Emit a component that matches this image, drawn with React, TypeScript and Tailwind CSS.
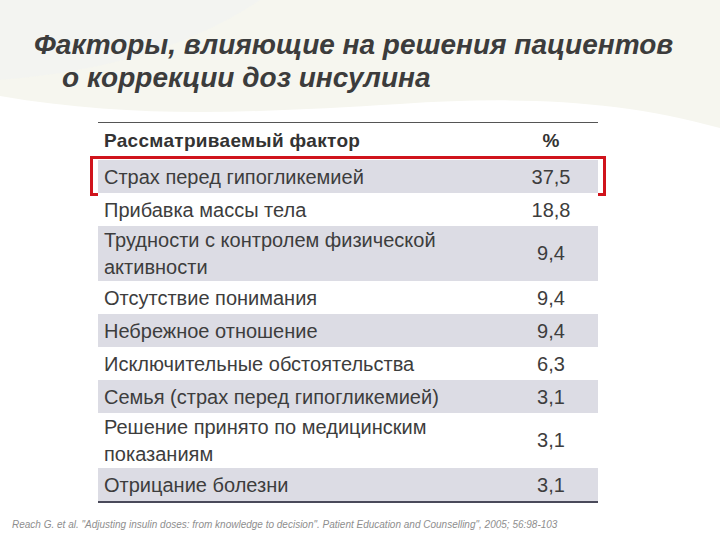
import React from 'react';

type Row = { label: React.ReactNode; value: string; shaded: boolean; tall?: boolean; marked?: boolean };

const rows: Row[] = [
  { label: 'Страх перед гипогликемией', value: '37,5', shaded: true, marked: true },
  { label: 'Прибавка массы тела', value: '18,8', shaded: false },
  { label: <>Трудности с контролем физической<br />активности</>, value: '9,4', shaded: true, tall: true },
  { label: 'Отсутствие понимания', value: '9,4', shaded: false },
  { label: 'Небрежное отношение', value: '9,4', shaded: true },
  { label: 'Исключительные обстоятельства', value: '6,3', shaded: false },
  { label: 'Семья (страх перед гипогликемией)', value: '3,1', shaded: true },
  { label: <>Решение принято по медицинским<br />показаниям</>, value: '3,1', shaded: false, tall: true },
  { label: 'Отрицание болезни', value: '3,1', shaded: true },
];

function Background() {
  return (
    <svg className="absolute inset-0 w-full h-full" viewBox="0 0 720 540" preserveAspectRatio="none">
      <rect width="720" height="540" fill="#ffffff" />
      <path d="M0 0 H720 V128 C620 100 520 96 400 104 C260 112 140 120 0 96 Z" fill="#f6f6ef" />
      <path d="M0 0 H260 C200 40 120 70 0 80 Z" fill="#f1f3f1" opacity="0.6" />
    </svg>
  );
}

export default function App() {
  return (
    <div className="relative w-[720px] h-[540px] overflow-hidden bg-white" style={{ fontFamily: '"Liberation Sans", Arial, sans-serif' }}>
      <Background />
      <div className="relative flex flex-col">
        <div className="pt-[28px] pl-[34px] text-[28px] leading-[33px] font-bold italic text-[#3c3c3c]">
          <div>Факторы, влияющие на решения пациентов</div>
          <div className="pl-[28px]">о коррекции доз инсулина</div>
        </div>

        <div className="ml-[98px] mt-[28px] w-[500px] border-t border-[#555] bg-white">
          <div className="flex h-[37px] items-center text-[19px] font-bold tracking-[0.3px] text-[#333]">
            <div className="w-[406px] pl-[6px]">Рассматриваемый фактор</div>
            <div className="flex-1 text-center">%</div>
          </div>
          {rows.map((r, i) => (
            <div
              key={i}
              className={`relative flex items-center text-[20px] text-[#3d3d3d] ${r.tall ? 'h-[55px] leading-[27px]' : 'h-[33px]'} ${r.shaded ? 'bg-[#dcdce4]' : 'bg-white'}`}
            >
              <div className="w-[406px] pl-[6px]">{r.label}</div>
              <div className="flex-1 text-center">{r.value}</div>
              {r.marked && (
                <div className="absolute -left-[8px] -right-[8px] -top-[4px] -bottom-[3px] border-[3px] border-[#d0141c]" />
              )}
            </div>
          ))}
          <div className="border-t-2 border-[#4a4a5a]" />
        </div>

        <div className="mt-[14px] pl-[12px] text-[10px] italic text-[#8e8e8e]">
          Reach G. et al. "Adjusting insulin doses: from knowledge to decision". Patient Education and Counselling", 2005; 56:98-103
        </div>
      </div>
    </div>
  );
}
